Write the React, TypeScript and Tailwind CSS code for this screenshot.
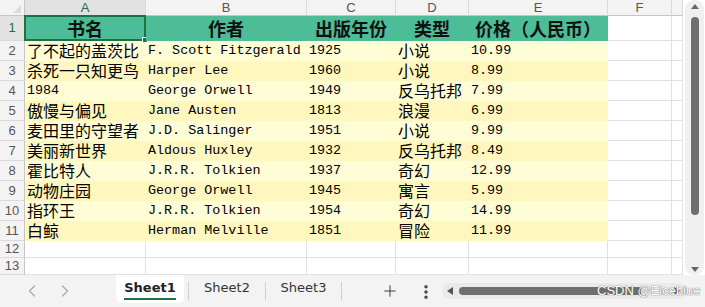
import { ChevronLeft, ChevronRight, Plus, EllipsisVertical } from "lucide-react";

// Book data shown in rows 2-11
const books = [
  ["了不起的盖茨比", "F. Scott Fitzgerald", "1925", "小说", "10.99"],
  ["杀死一只知更鸟", "Harper Lee", "1960", "小说", "8.99"],
  ["1984", "George Orwell", "1949", "反乌托邦", "7.99"],
  ["傲慢与偏见", "Jane Austen", "1813", "浪漫", "6.99"],
  ["麦田里的守望者", "J.D. Salinger", "1951", "小说", "9.99"],
  ["美丽新世界", "Aldous Huxley", "1932", "反乌托邦", "8.49"],
  ["霍比特人", "J.R.R. Tolkien", "1937", "奇幻", "12.99"],
  ["动物庄园", "George Orwell", "1945", "寓言", "5.99"],
  ["指环王", "J.R.R. Tolkien", "1954", "奇幻", "14.99"],
  ["白鲸", "Herman Melville", "1851", "冒险", "11.99"],
];

const headers = ["书名", "作者", "出版年份", "类型", "价格（人民币）"];
const colLetters = ["A", "B", "C", "D", "E", "F", ""];

const isCJK = (s: string) => /[\u4e00-\u9fff]/.test(s);

function RowHead({ n, active }: { n: number | string; active?: boolean }) {
  return (
    <div
      className={`flex items-center justify-center border-r border-b border-r-[#c6c6c6] border-b-[#dadada] text-[13px] font-['Liberation_Sans',sans-serif] ${
        active ? "bg-[#e2e2e2] text-[#1f6e43]" : "bg-[#f3f3f3] text-[#555]"
      }`}
    >
      {n}
    </div>
  );
}

function EmptyCell() {
  return <div className="bg-white border-r border-b border-[#e1e1e1]" />;
}

function DataCell({ text, bg }: { text: string; bg: string }) {
  const cjk = isCJK(text);
  return (
    <div className={`${bg} border-r border-b border-transparent flex items-end pl-[2px] whitespace-nowrap text-black`}>
      {cjk ? (
        <span className="text-[16px] leading-[19px] font-['Noto_Sans_CJK_SC',sans-serif]">{text}</span>
      ) : (
        <span className="text-[13.4px] leading-[17px] pb-[1px] font-['Liberation_Mono','Noto_Sans_CJK_SC',monospace]">{text}</span>
      )}
    </div>
  );
}

export default function App() {
  return (
    <div className="w-[705px] h-[307px] bg-white overflow-hidden flex flex-col select-none">
      {/* Sheet area + vertical scrollbar */}
      <div className="h-[275px] flex">
        <div className="grid grid-cols-[25px_121px_161px_89px_73px_139px_64px_11px] grid-rows-[16px_25px_repeat(10,20px)_17px_17px]">
          {/* Corner */}
          <div className="relative bg-[#f3f3f3] border-r border-b border-r-[#c6c6c6] border-b-[#c6c6c6]">
            <div className="absolute right-[3px] bottom-[2px] w-0 h-0 border-l-[8px] border-l-transparent border-b-[8px] border-b-[#dcdcdc]" />
          </div>
          {/* Column letters */}
          {colLetters.map((c, i) => (
            <div
              key={c + i}
              className={`flex items-center justify-center border-r border-b border-r-[#dadada] border-b-[#c6c6c6] text-[13px] leading-none font-['Liberation_Sans',sans-serif] ${
                i === 0 ? "bg-[#e2e2e2] text-[#1f6e43]" : "bg-[#f3f3f3] text-[#555]"
              }`}
            >
              {c}
            </div>
          ))}

          {/* Row 1: header */}
          <RowHead n={1} active />
          {headers.map((h, i) => (
            <div
              key={h}
              className="relative bg-[#4cbd97] border-r border-b border-transparent flex items-end justify-center pb-[1px] whitespace-nowrap"
            >
              <span className="text-[18px] leading-[21px] font-bold text-[#111] font-['Noto_Sans_CJK_SC',sans-serif]">{h}</span>
              {i === 0 && (
                <div className="absolute -left-[1px] -top-[1px] w-[122px] h-[26px] border-2 border-[#1e7145]">
                  <div className="absolute -right-[4px] -bottom-[4px] w-[6px] h-[6px] bg-[#1e7145] border border-white" />
                </div>
              )}
            </div>
          ))}
          <EmptyCell />
          <EmptyCell />

          {/* Rows 2-11 */}
          {books.map((row, r) => {
            const bg = r % 2 === 0 ? "bg-[#fffdd5]" : "bg-[#fff7bd]";
            return [
              <RowHead key={`h${r}`} n={r + 2} />,
              ...row.map((t, c) => <DataCell key={`${r}-${c}`} text={t} bg={bg} />),
              <EmptyCell key={`f${r}`} />,
              <EmptyCell key={`g${r}`} />,
            ];
          })}

          {/* Rows 12-13 */}
          {[12, 13].map((n) => [
            <RowHead key={`h${n}`} n={n} />,
            ...[0, 1, 2, 3, 4, 5, 6].map((c) => <EmptyCell key={`${n}-${c}`} />),
          ])}
        </div>

        {/* Vertical scrollbar */}
        <div className="w-[22px] h-full bg-white pl-[2px]">
          <div className="w-[19px] h-full bg-[#f0f0f0] rounded-[9px] flex flex-col items-center">
            <div className="mt-[4px] w-0 h-0 border-x-[4px] border-x-transparent border-b-[5px] border-b-[#666]" />
            <div className="mt-[8px] w-[8px] h-[198px] rounded-full bg-[#6f6f6f]" />
            <div className="flex-1" />
            <div className="mb-[3px] w-0 h-0 border-x-[4px] border-x-transparent border-t-[5px] border-t-[#666]" />
          </div>
        </div>
      </div>

      {/* Sheet tabs bar */}
      <div className="relative h-[32px] bg-[#f3f3f3] flex items-start">
        <div className="w-[116px] h-full flex items-start pt-[6px] pl-[22px] gap-[13px] text-[#a8a8a8]">
          <ChevronLeft size={20} strokeWidth={1.5} />
          <ChevronRight size={20} strokeWidth={1.5} />
        </div>

        <div className="w-[68px] h-[28px] bg-white rounded-b-[6px] flex flex-col items-center pt-[5px]">
          <span className="text-[13px] leading-[16px] font-bold text-[#222] font-['DejaVu_Sans',sans-serif]">Sheet1</span>
          <div className="mt-[2px] w-[52px] h-[2px] bg-[#1e7145]" />
        </div>

        <div className="ml-[4px] mt-[7px] w-px h-[18px] bg-[#d0d0d0]" />
        <div className="w-[76px] flex justify-center pt-[5px]">
          <span className="text-[13px] leading-[16px] text-[#333] font-['DejaVu_Sans',sans-serif]">Sheet2</span>
        </div>
        <div className="mt-[7px] w-px h-[18px] bg-[#d0d0d0]" />
        <div className="w-[75px] flex justify-center pt-[5px]">
          <span className="text-[13px] leading-[16px] text-[#333] font-['DejaVu_Sans',sans-serif]">Sheet3</span>
        </div>
        <div className="mt-[7px] w-px h-[18px] bg-[#d0d0d0]" />

        <Plus size={18} strokeWidth={1.25} className="ml-[39px] mt-[7px] text-[#333]" />
        <EllipsisVertical size={18} strokeWidth={2.5} className="ml-[18px] mt-[8px] text-[#444]" />

        {/* Horizontal scrollbar */}
        <div className="ml-[7px] mt-[8px] w-[245px] h-[16px] rounded-full bg-[#eaeaea] flex items-center">
          <div className="ml-[5px] w-0 h-0 border-y-[4px] border-y-transparent border-r-[6px] border-r-[#555]" />
          <div className="ml-[6px] w-[183px] h-[8px] rounded-full bg-[#6f6f6f]" />
          <div className="ml-[32px] w-0 h-0 border-y-[4px] border-y-transparent border-l-[6px] border-l-[#555]" />
        </div>

        {/* Watermark */}
        <span className="absolute left-[597px] top-[8px] text-[13px] leading-[16px] text-white font-['Liberation_Sans',sans-serif] [text-shadow:0_0_1px_#666,0_0_1px_#666]">
          CSDN @Eiceblue
        </span>
      </div>
    </div>
  );
}
